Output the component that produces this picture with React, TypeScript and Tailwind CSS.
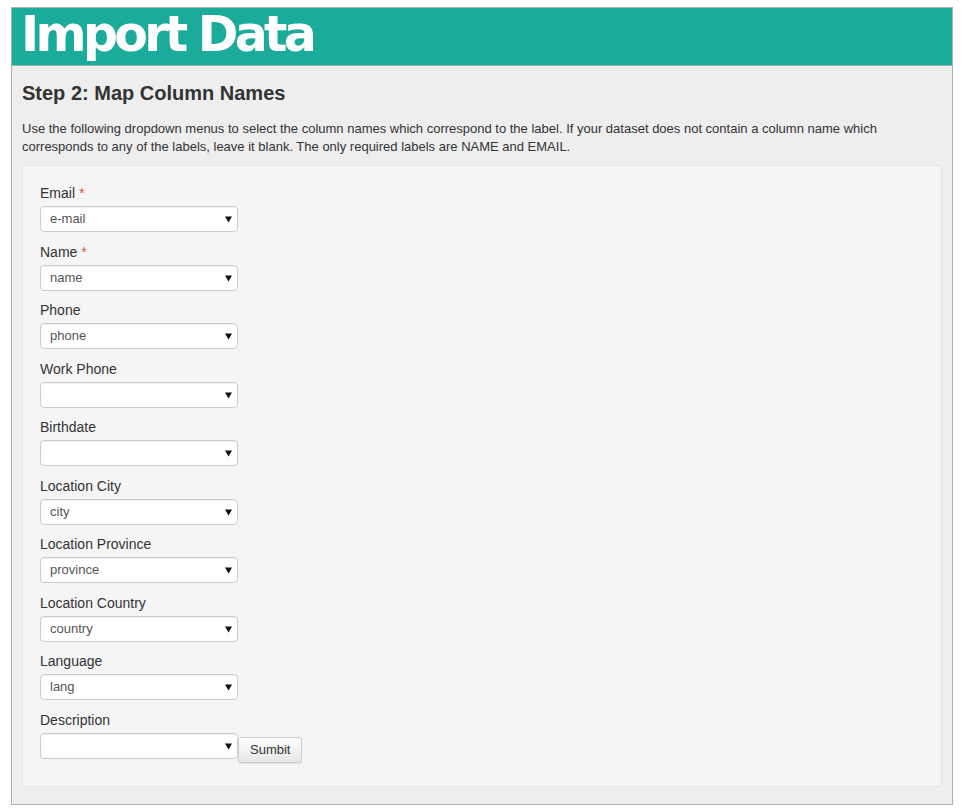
const fields: { label: string; value: string; required?: boolean }[] = [
  { label: 'Email', value: 'e-mail', required: true },
  { label: 'Name', value: 'name', required: true },
  { label: 'Phone', value: 'phone' },
  { label: 'Work Phone', value: '' },
  { label: 'Birthdate', value: '' },
  { label: 'Location City', value: 'city' },
  { label: 'Location Province', value: 'province' },
  { label: 'Location Country', value: 'country' },
  { label: 'Language', value: 'lang' },
  { label: 'Description', value: '' },
];

function Select({ value }: { value: string }) {
  return (
    <div className="relative w-[198px] h-[26px]">
      <select
        defaultValue={value}
        className="appearance-none w-full h-full bg-white border border-[#ccc] rounded-[4px] pl-[9px] text-[13px] text-[#555] outline-none shadow-[inset_0_1px_1px_rgba(0,0,0,0.05)]"
      >
        <option value={value}>{value}</option>
      </select>
      {/* arrow */}
      <svg className="absolute right-[6px] top-[10px] pointer-events-none" width="7" height="7" viewBox="0 0 7 7">
        <path d="M0 0.5h7L3.5 6.5z" fill="#111" />
      </svg>
    </div>
  );
}

export default function App() {
  return (
    <div className="min-h-[810px] bg-white pt-[7px] pl-[11px] font-['Liberation_Sans',Arial,sans-serif]">
      <div className="w-[942px] border border-[#adadad] bg-[#eeeeee]">
        {/* Header */}
        <div className="h-[58px] bg-[#1aab9b] border-b border-[#8fb5b0] pl-[9px] flex items-center">
          <h1 className="text-white font-bold text-[49px] leading-none tracking-[-3.7px] font-['DejaVu_Sans','Verdana',sans-serif] -mt-[4px]">
            Import Data
          </h1>
        </div>

        {/* Body */}
        <div className="px-[10px] pb-[17px]">
          <h2 className="text-[20px] font-bold text-[#333] leading-[22px] mt-[16px]">Step 2: Map Column Names</h2>
          <p className="text-[13px] leading-[18px] text-[#333] mt-[16px] mb-[9px]">
            Use the following dropdown menus to select the column names which correspond to the label. If your dataset does not contain a column name which corresponds to any of the labels, leave it blank. The only required labels are NAME and EMAIL.
          </p>

          <div className="bg-[#f5f5f5] border border-[#e3e3e3] rounded-[4px] pl-[17px] pt-[17px] pb-[23px]">
            {fields.map((f, i) => (
              <div key={f.label} className={i === fields.length - 1 ? '' : 'mb-[9.5px]'}>
                <label className="block text-[14px] leading-[20px] text-[#333] mb-[3px]">
                  {f.label}
                  {f.required && <span className="text-[#d9534f]"> *</span>}
                </label>
                {i === fields.length - 1 ? (
                  <div className="flex items-start">
                    <Select value={f.value} />
                    <button className="mt-[4px] h-[26px] px-[11px] text-[13px] text-[#333] border border-[#ccc] rounded-[3px] bg-gradient-to-b from-white to-[#e6e6e6] shadow-[0_1px_1px_rgba(0,0,0,0.08)]">
                      Sumbit
                    </button>
                  </div>
                ) : (
                  <Select value={f.value} />
                )}
              </div>
            ))}
          </div>
        </div>
      </div>
    </div>
  );
}
